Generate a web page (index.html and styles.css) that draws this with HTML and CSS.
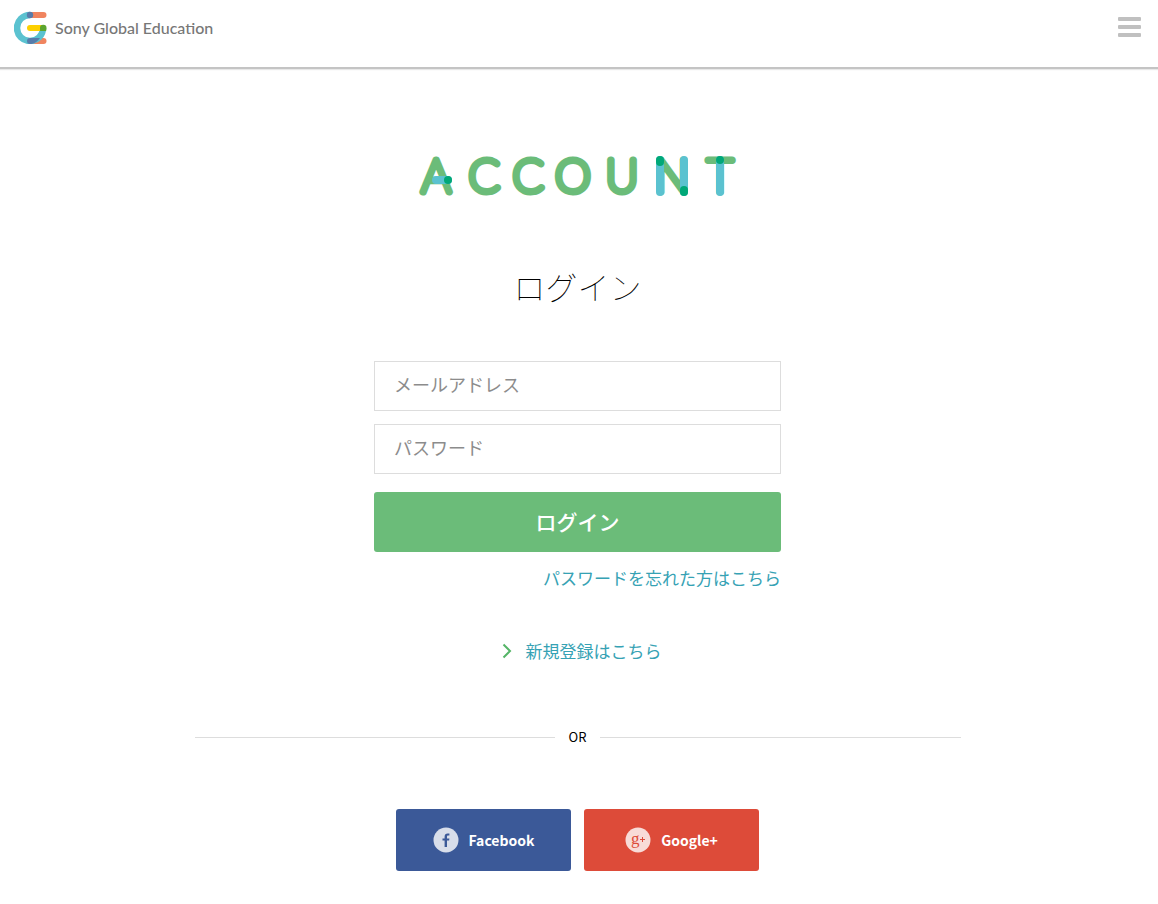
FILE: index.html
```html
<!DOCTYPE html>
<html lang="ja">
	<head>
		<meta charset="UTF-8">
		<meta name="viewport" content="width=device-width, initial-scale=1">
		<title>ログイン | Sony Global Education</title>
		<link rel="stylesheet" href="styles.css">
	</head>

	<body>
		<header class="header">
			<a href="#" class="brand">
				<svg class="brand_mark" viewBox="0 0 33 33" width="33" height="33" aria-hidden="true">
					<path d="M16 1H29.5a3 3 0 0 1 0 6H16z" fill="#f0845f"/>
					<path d="M16 27H29.5a3 3 0 0 1 0 6H16z" fill="#f0845f"/>
					<path d="M16 4A13 13 0 1 0 29 17" fill="none" stroke="#5bc2d0" stroke-width="6.500"/>
					<circle cx="16" cy="4" r="3.200" fill="#577cab"/>
					<path d="M16 27h10q-3.500 5-8.500 6H16a3 3 0 0 1 0-6z" fill="#577cab"/>
					<path d="M16 14h13.500v6H16a3 3 0 0 1 0-6z" fill="#fdd000"/>
					<path d="M26 17a3 3 0 0 1 6.500 0q0 1.500-.4 3h-6z" fill="#5ca52e"/>
				</svg>
				<span>Sony Global Education</span>
			</a>
			<button type="button" class="menu_btn" aria-label="メニュー">
				<span></span>
				<span></span>
				<span></span>
			</button>
		</header>

		<main class="content">
			<svg class="account_logo" viewBox="0 0 326 64" width="326" height="64">
				<text y="47" x="21 69 113 158 207 257 305">ACCOUNT</text>
				<g class="blue">
					<rect x="17" y="31" width="20" height="8" rx="4"/>
					<rect x="241" y="11" width="8" height="40" rx="4"/>
					<rect x="265" y="11" width="8" height="40" rx="4"/>
					<rect x="301" y="11" width="8" height="40" rx="4"/>
				</g>
				<g class="overlap">
					<rect x="29" y="31" width="8" height="8" rx="4"/>
					<rect x="241" y="11" width="8" height="10" rx="4"/>
					<rect x="265" y="41" width="8" height="10" rx="4"/>
					<rect x="301" y="11" width="8" height="8" rx="4"/>
				</g>
			</svg>

			<h1>ログイン</h1>

			<form class="login">
				<input type="email" class="field" placeholder="メールアドレス" aria-label="メールアドレス">
				<input type="password" class="field" placeholder="パスワード" aria-label="パスワード">
				<button type="submit" class="login_btn">ログイン</button>
				<a href="#" class="forgot">パスワードを忘れた方はこちら</a>
			</form>

			<a href="#" class="register">
				<svg viewBox="0 0 10 16" width="10" height="16" aria-hidden="true">
					<path d="M1.500 1.500L8 8L1.500 14.500" fill="none" stroke="#55b567" stroke-width="2"/>
				</svg>
				新規登録はこちら
			</a>

			<div class="or">OR</div>

			<div class="social">
				<button type="button" class="social_btn facebook">
					<svg viewBox="0 0 26 26" width="26" height="26" aria-hidden="true">
						<circle cx="13" cy="13" r="12.500" fill="#d8deea"/>
						<path d="M11.600 20v-6.500H9.500v-2h2.100V9.700c0-2.200 1.200-3.300 3-3.300h1.800v2.100h-1.200c-.9 0-1.200.5-1.200 1.300v1.700h2.400l-.3 2h-2.100V20z" fill="#3b5998"/>
					</svg>
					Facebook
				</button>
				<button type="button" class="social_btn google">
					<svg viewBox="0 0 26 26" width="26" height="26" aria-hidden="true">
						<circle cx="13" cy="13" r="12.500" fill="#f8dbd7"/>
						<text x="6" y="17">g</text>
						<path d="M15 12.500h5M17.500 10v5" stroke="#dd4b39"/>
					</svg>
					Google+
				</button>
			</div>
		</main>
	</body>
</html>
```
FILE: styles.css
```css
* {
	box-sizing: border-box;
}
body {
	margin: 0;
	background: #fff;
	color: #000;
	font-family: "Noto Sans CJK JP", sans-serif;
}
a {
	color: #36a2b4;
	text-decoration: none;
}
button {
	border: 0;
	padding: 0;
	font-family: inherit;
	cursor: pointer;
}

.header {
	display: flex;
	justify-content: space-between;
	align-items: flex-start;
	height: 69px;
	padding: 11px 17px 0 14px;
	border-bottom: 2px solid #c4c4c4;
	box-shadow: 0 1px 1px #e8e8e8;
}
.brand {
	display: flex;
	align-items: center;
	gap: 8px;
	color: #777;
	font-family: Lato, sans-serif;
	font-size: 16px;
	font-weight: 500;
	line-height: 33px;
}
.menu_btn {
	display: flex;
	flex-direction: column;
	gap: 4px;
	width: 23px;
	padding-top: 6px;
	background: none;
}
.menu_btn span {
	height: 4px;
	border-radius: 1px;
	background: #c0c0c0;
}

.content {
	display: flex;
	flex-direction: column;
	align-items: center;
	padding: 76px 3px 32px 0;
}
.account_logo text {
	fill: #6bbc79;
	stroke: #6bbc79;
	stroke-width: 7px;
	stroke-linejoin: round;
	text-anchor: middle;
	font-family: Lato, sans-serif;
	font-size: 45px;
	font-weight: 100;
}
.blue {
	fill: #5bc2d0;
}
.overlap {
	fill: #00a878;
}
h1 {
	margin: 49px 0 47px;
	font-size: 32px;
	font-weight: 100;
	line-height: 56px;
}

.login {
	display: flex;
	flex-direction: column;
	width: 407px;
	max-width: 100%;
}
.field {
	height: 50px;
	margin-bottom: 13px;
	padding: 0 19px 4px;
	border: 1px solid #ddd;
	font-family: inherit;
	font-size: 18px;
}
.field::placeholder {
	color: #8c8c8c;
}
.login_btn {
	height: 60px;
	margin-top: 5px;
	padding-bottom: 2px;
	border-radius: 3px;
	background: #6bbc79;
	color: #fff;
	font-size: 21px;
	font-weight: 500;
}
.forgot {
	align-self: flex-end;
	margin-top: 13px;
	font-size: 17px;
	line-height: 26px;
}
.register {
	display: flex;
	align-items: center;
	gap: 14px;
	margin: 47px 0 0 8px;
	font-size: 17px;
	line-height: 26px;
}

.or {
	display: flex;
	align-items: center;
	gap: 14px;
	width: 766px;
	max-width: 100%;
	margin: 61px 0 60px;
	font-size: 13px;
	line-height: 24px;
}
.or::before,
.or::after {
	content: "";
	flex: 1;
	border-top: 1px solid #ddd;
}

.social {
	display: flex;
	gap: 13px;
}
.social_btn {
	display: flex;
	justify-content: center;
	align-items: center;
	gap: 10px;
	width: 175px;
	height: 62px;
	padding-bottom: 1px;
	border-radius: 3px;
	color: #fff;
	font-size: 14px;
	font-weight: 700;
}
.facebook {
	background: #3b5998;
}
.google {
	background: #dd4b39;
}
.google text {
	fill: #dd4b39;
	font-family: "Liberation Serif", serif;
	font-size: 17px;
	font-weight: 400;
}
```
